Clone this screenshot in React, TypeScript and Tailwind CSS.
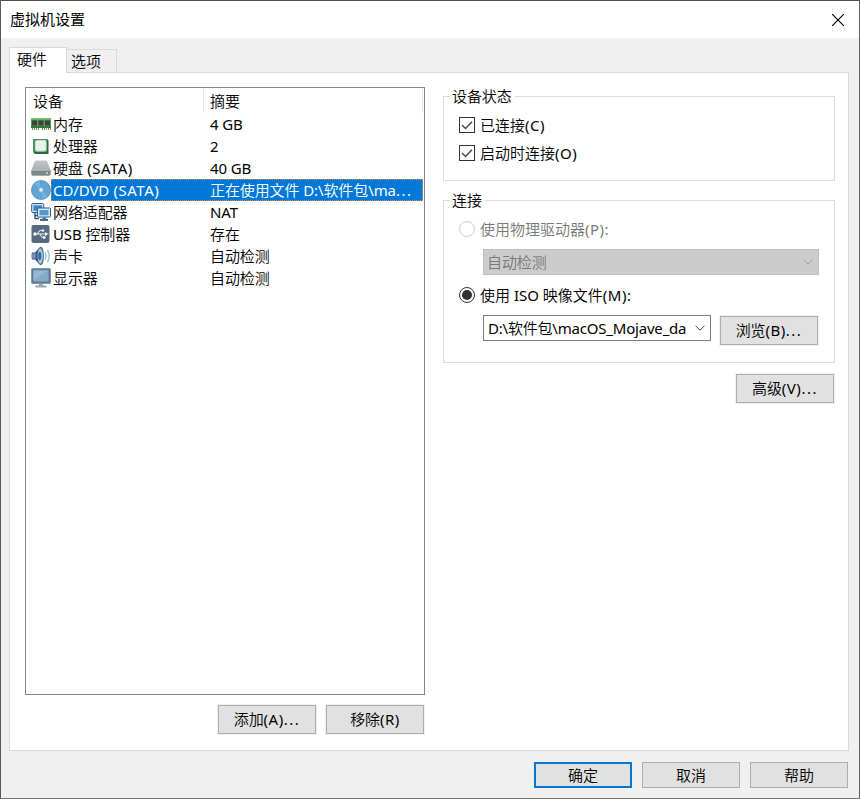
import type { ReactNode } from "react";

const svg = "block h-5 w-5 shrink-0";

function MemoryIcon() {
  return (
    <svg className={svg} viewBox="0 0 20 20">
      <rect x="0" y="4" width="20" height="10" fill="#4aa750" />
      <rect x="0" y="4" width="20" height="1.5" fill="#6fcc73" />
      {[1, 7.5, 14].map((x) => (
        <rect key={x} x={x} y="6.5" width="5" height="5" fill="#453a3c" />
      ))}
      <rect x="0" y="12" width="20" height="2" fill="#2f7a38" />
      <path d="M1 15H9M11 15H20" stroke="#7d9a4c" strokeWidth="2" strokeDasharray="1 1" />
    </svg>
  );
}

function CpuIcon() {
  return (
    <svg className={svg} viewBox="0 0 20 20">
      <path d="M2 3h14l1.5 1.5V18H4l-2-2z" fill="#2d6b3f" />
      <path d="M2 3h14v13H2z" fill="#44985a" />
      <rect x="4.5" y="4.5" width="10.5" height="10.5" rx="1.5" fill="#ecefea" stroke="#c9dccb" />
    </svg>
  );
}

function DiskIcon() {
  return (
    <svg className={svg} viewBox="0 0 20 20">
      <defs>
        <linearGradient id="disk" x2="0" y2="1">
          <stop stopColor="#c4c7ca" />
          <stop offset="1" stopColor="#9ba1a7" />
        </linearGradient>
      </defs>
      <path d="M5 2.5h10q1 0 1.3 1L19.5 12v4q0 1.5-1.5 1.5H2Q.5 17.5 .5 16v-4L3.7 3.5Q4 2.5 5 2.5z" fill="url(#disk)" />
      <path d="M.5 12h19v4q0 1.5-1.5 1.5H2Q.5 17.5 .5 16z" fill="#7d858d" />
      <path d="M1 12.2h18" stroke="#cfd2d4" strokeWidth=".8" />
      <rect x="15" y="14" width="2" height="2" fill="#a4e28a" />
    </svg>
  );
}

function DiscIcon() {
  return (
    <svg className={svg} viewBox="0 0 20 20">
      <circle cx="10" cy="10" r="9.8" fill="#62a4d3" />
      <path d="M10 10L3 3.3A9.7 9.7 0 0 1 8 .5z" fill="#78b2dc" />
      <path d="M10 10L17 16.7A9.7 9.7 0 0 1 12 19.5z" fill="#78b2dc" />
      <circle cx="10" cy="10" r="9.4" fill="none" stroke="#5093c6" strokeWidth=".7" />
      <circle cx="10" cy="10" r="3.3" fill="#8cc0e4" stroke="#4b8fc4" strokeWidth=".6" />
      <circle cx="10" cy="10" r="1.4" fill="#eaf5fc" />
    </svg>
  );
}

function NetworkIcon() {
  return (
    <svg className={svg} viewBox="0 0 20 20">
      <rect x=".7" y="1.5" width="12" height="9" rx="1" fill="#d3e4ef" stroke="#315d86" />
      <rect x="2.5" y="3.3" width="8.5" height="5.5" fill="#3587c8" />
      <path d="M4 11v5.5H8M4 13.5h3" fill="none" stroke="#27597f" strokeWidth="1.4" />
      <rect x="6.5" y="6" width="13" height="9" rx="1" fill="#dceaf3" stroke="#315d86" />
      <rect x="8.5" y="8" width="9" height="5.3" fill="#4a9bd7" />
      <path d="M11.5 15.5h3.5V17h2v2H9v-2h2.5z" fill="#406b8d" />
    </svg>
  );
}

function UsbIcon() {
  return (
    <svg className={svg} viewBox="0 0 20 20">
      <rect x=".5" y="1" width="18" height="18" rx="2" fill="#546b82" />
      <path d="M4 10h10M6 10l3-3.5h3M8.5 10l3 3.5H13" fill="none" stroke="#e9edf1" strokeWidth="1.1" />
      <circle cx="4" cy="10" r="1.8" fill="#f4f6f8" />
      <path d="M14 8l3.5 2-3.5 2z" fill="#f4f6f8" />
      <circle cx="12" cy="6.5" r="1.2" fill="#f4f6f8" />
      <rect x="12" y="12.2" width="2.5" height="2.5" fill="#f4f6f8" />
    </svg>
  );
}

function SoundIcon() {
  return (
    <svg className={svg} viewBox="0 0 20 20">
      <path d="M1 6.5h3L9 1Q12.8 0 12.8 10T9 19L4 13.5H1q-1-3.5 0-7z" fill="#3a5d7e" />
      <path d="M1.500 7.5h3v5h-3q-.8-2.5 0-5z" fill="#8298ad" />
      <ellipse cx="9.3" cy="10" rx="2.6" ry="7.8" fill="#a9cfe8" />
      <ellipse cx="8.8" cy="10" rx="1.5" ry="4.3" fill="#2f679b" />
      <path d="M14 6.5q2 3.5 0 7M16.500 4q3.500 6 0 12" fill="none" stroke="#9cc4df" strokeWidth="1.5" />
    </svg>
  );
}

function DisplayIcon() {
  return (
    <svg className={svg} viewBox="0 0 20 20">
      <rect x=".5" y=".5" width="19" height="15" rx="1" fill="#5d7d96" stroke="#8099ab" />
      <rect x="2.5" y="2.5" width="15" height="11" fill="#86abc7" />
      <path d="M2.5 2.5h15L2.5 12z" fill="#96b8d1" />
      <path d="M8 16h4v1.5h3.5v2h-11v-2H8z" fill="#98a5b0" />
    </svg>
  );
}

// Latin groups in parentheses and ellipses are set wider than the ideographs around them.
function Label({ text }: { text: string }) {
  return (
    <span>
      {text.split(/( ?\([A-Z]+\):?|\.\.\.)/).map((part, i) => {
        if (part === "...") return <span key={i} className="tracking-[1.5px]">{part}</span>;
        if (/^ ?\(/.test(part)) return <span key={i} className="tracking-[0.5px]">{part}</span>;
        return part;
      })}
    </span>
  );
}

const devices: { icon: ReactNode; name: string; summary: string; selected?: boolean }[] = [
  { icon: <MemoryIcon />, name: "内存", summary: "4 GB" },
  { icon: <CpuIcon />, name: "处理器", summary: "2" },
  { icon: <DiskIcon />, name: "硬盘 (SATA)", summary: "40 GB" },
  { icon: <DiscIcon />, name: "CD/DVD (SATA)", summary: "正在使用文件 D:\\软件包\\ma...", selected: true },
  { icon: <NetworkIcon />, name: "网络适配器", summary: "NAT" },
  { icon: <UsbIcon />, name: "USB 控制器", summary: "存在" },
  { icon: <SoundIcon />, name: "声卡", summary: "自动检测" },
  { icon: <DisplayIcon />, name: "显示器", summary: "自动检测" },
];

function Button({ text, className = "h-[29px] shadow-[0_0_0_1px_#f0f0f0]" }: { text: string; className?: string }) {
  return (
    <button className={`flex w-[98px] shrink-0 items-center justify-center border border-[#adadad] bg-[#e1e1e1] pb-px ${className}`}>
      <Label text={text} />
    </button>
  );
}

function Check({ text }: { text: string }) {
  return (
    <label className="flex h-7 items-center gap-[5px] tracking-normal">
      <svg className="h-4 w-4 shrink-0" viewBox="0 0 16 16" fill="none">
        <rect x=".5" y=".5" width="15" height="15" stroke="#333" />
        <path d="M3 8l3.5 3.5L13 4.7" stroke="#444" strokeWidth="1.4" />
      </svg>
      <Label text={text} />
    </label>
  );
}

function Radio({ text, on = false }: { text: string; on?: boolean }) {
  return (
    <label className={`flex h-6 items-center gap-[5px] tracking-normal ${on ? "" : "text-[#787878]"}`}>
      <svg className="h-4 w-4 shrink-0" viewBox="0 0 16 16" fill="none">
        <circle cx="8" cy="8" r="7.5" stroke={on ? "#333" : "#ccc"} />
        {on && <circle cx="8" cy="8" r="5" fill="#333" />}
      </svg>
      <Label text={text} />
    </label>
  );
}

function Chevron({ color }: { color: string }) {
  return (
    <svg className="h-[6px] w-[10px] shrink-0" viewBox="0 0 10 6" fill="none">
      <path d="M.5 .7L5 5.2L9.5 .7" stroke={color} />
    </svg>
  );
}

function Group({ title, className, children }: { title: string; className: string; children: ReactNode }) {
  return (
    <section className={`w-[392px] border border-[#dcdcdc] ${className}`}>
      <h2 className="-mt-[11px] ml-[6px] h-5 w-fit bg-white px-[2px] pr-[3px] leading-5">{title}</h2>
      {children}
    </section>
  );
}

export default function App() {
  return (
    <main className="flex h-[799px] w-[860px] flex-col overflow-hidden border border-t-[#4f4f55] border-r-[#606064] border-b-[#74766d] border-l-[#58585c] bg-[#f0f0f0] font-['Noto_Sans','Noto_Sans_CJK_SC_DemiLight','Noto_Sans_CJK_SC_Light','Noto_Sans_CJK_SC',sans-serif] text-[15px] leading-[22px] tracking-[-0.1px] whitespace-nowrap text-black">
      <header className="flex h-[37px] shrink-0 items-center justify-between bg-white pr-[15px] pl-[9px]">
        <h1 className="pb-[2px] font-['Noto_Sans_CJK_SC',sans-serif] tracking-normal">虚拟机设置</h1>
        <svg className="h-3 w-3" viewBox="0 0 12 12">
          <path d="M0 0L12 12M12 0L0 12" stroke="#000" strokeWidth="1.1" />
        </svg>
      </header>

      <nav className="flex h-[34px] shrink-0 items-end pl-2">
        <div className="z-10 -mb-px h-[26px] w-[58px] border border-b-0 border-[#d9d9d9] bg-white pl-[7px]">硬件</div>
        <div className="-mb-px h-6 w-[50px] border border-l-0 border-[#d9d9d9] bg-[#f0f0f0] pl-[4px]">选项</div>
      </nav>

      <div className="ml-2 flex h-[679px] w-[840px] shrink-0 border border-[#d9d9d9] bg-white pt-[14px] pl-[15px]">
        <div className="w-[400px] shrink-0">
          <div className="h-[608px] border border-[#828790] pt-px">
            <div className="flex h-6 w-[397px] border-r border-[#e5e5e5] leading-6">
              <div className="w-[178px] border-r border-[#e5e5e5] pl-[7px]">设备</div>
              <div className="pl-[6px]">摘要</div>
            </div>
            {devices.map((d) => (
              <div key={d.name} className="flex h-[22px] items-center pl-[5px]">
                {d.icon}
                <div
                  className={`flex h-[22px] w-[372px] items-center border border-dotted ${
                    d.selected ? "border-[#d98545] bg-[#0078d7] text-white" : "border-transparent"
                  }`}
                >
                  <div className="w-[158px] pl-px">
                    <Label text={d.name} />
                  </div>
                  <Label text={d.summary} />
                </div>
              </div>
            ))}
          </div>
          <div className="mt-[10px] flex justify-end gap-[10px] pr-px">
            <Button text="添加(A)..." />
            <Button text="移除(R)" />
          </div>
        </div>

        <div className="ml-[18px] flex w-[392px] flex-col pt-[9px]">
          <Group title="设备状态" className="h-[85px]">
            <div className="pt-[5px] pl-[15px]">
              <Check text="已连接(C)" />
              <Check text="启动时连接(O)" />
            </div>
          </Group>
          <Group title="连接" className="mt-[19px] h-[163px]">
            <div className="pt-[7px] pl-[15px]">
              <Radio text="使用物理驱动器(P):" />
              <div className="mt-2 ml-6 flex h-[26px] w-[336px] items-center justify-between border border-[#bfbfbf] bg-[#ccc] pr-[5px] pl-[3px] text-[#787878]">
                自动检测
                <Chevron color="#a0a0a0" />
              </div>
              <div className="mt-2">
                <Radio on text="使用 ISO 映像文件(M):" />
              </div>
              <div className="mt-2 ml-6 flex gap-[9px]">
                <div className="flex h-[26px] w-[228px] items-center justify-between border border-[#7a7a7a] bg-white pr-[5px] pl-1">
                  <span className="pb-px tracking-[-0.2px]">D:\软件包\macOS_Mojave_da</span>
                  <Chevron color="#444" />
                </div>
                <Button text="浏览(B)..." className="mt-px h-[29px] shadow-[0_0_0_1px_#f0f0f0]" />
              </div>
            </div>
          </Group>
          <div className="mt-[11px] flex justify-end pr-px">
            <Button text="高级(V)..." />
          </div>
        </div>
      </div>

      <footer className="mt-[11px] flex justify-end gap-[10px] pr-[11px]">
        <Button text="确定" className="h-[26px] outline-2 -outline-offset-2 outline-[#0078d7]" />
        <Button text="取消" className="h-[26px]" />
        <Button text="帮助" className="h-[26px]" />
      </footer>
    </main>
  );
}
